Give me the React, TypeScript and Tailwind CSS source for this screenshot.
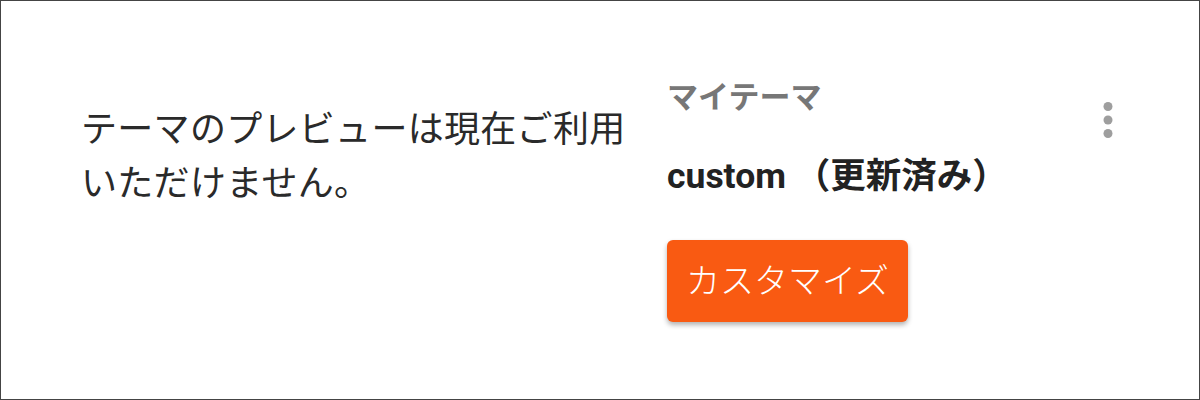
export default function App() {
  return (
    <div className="w-[1200px] h-[400px] border border-[#444] bg-white flex items-center font-['Roboto','Noto_Sans_CJK_JP',sans-serif]">
      {/* Preview unavailable */}
      <div className="w-[586px] pl-[80px] pb-[86px] shrink-0">
        <p className="text-[36px] leading-[54px] font-normal text-[#2a2a2a] whitespace-nowrap tracking-[0.3px]">
          テーマのプレビューは現在ご利用
          <br />
          いただけません。
        </p>
      </div>

      {/* Theme info */}
      <div className="flex-1 flex items-start">
        <div className="flex-1 flex flex-col pl-[80px]">
          <div className="text-[31px] leading-[40px] font-bold text-[#777]">マイテーマ</div>
          <div className="mt-[36px] text-[35.5px] leading-[44px] font-bold text-[#222]">
            custom （更新済み）
          </div>
          <div className="mt-[42px]">
            <button className="w-[241px] h-[82px] rounded-[6px] bg-[#f95a12] text-white text-[34px] font-light shadow-[0_3px_5px_rgba(0,0,0,0.3)]">
              カスタマイズ
            </button>
          </div>
        </div>
        <button className="mt-[15px] mr-[64px] w-[54px] h-[54px] text-[#9e9e9e]">
          <svg viewBox="0 0 24 24" className="w-[54px] h-[54px]" fill="currentColor">
            <circle cx="12" cy="6" r="2" />
            <circle cx="12" cy="12" r="2" />
            <circle cx="12" cy="18" r="2" />
          </svg>
        </button>
      </div>
    </div>
  );
}
